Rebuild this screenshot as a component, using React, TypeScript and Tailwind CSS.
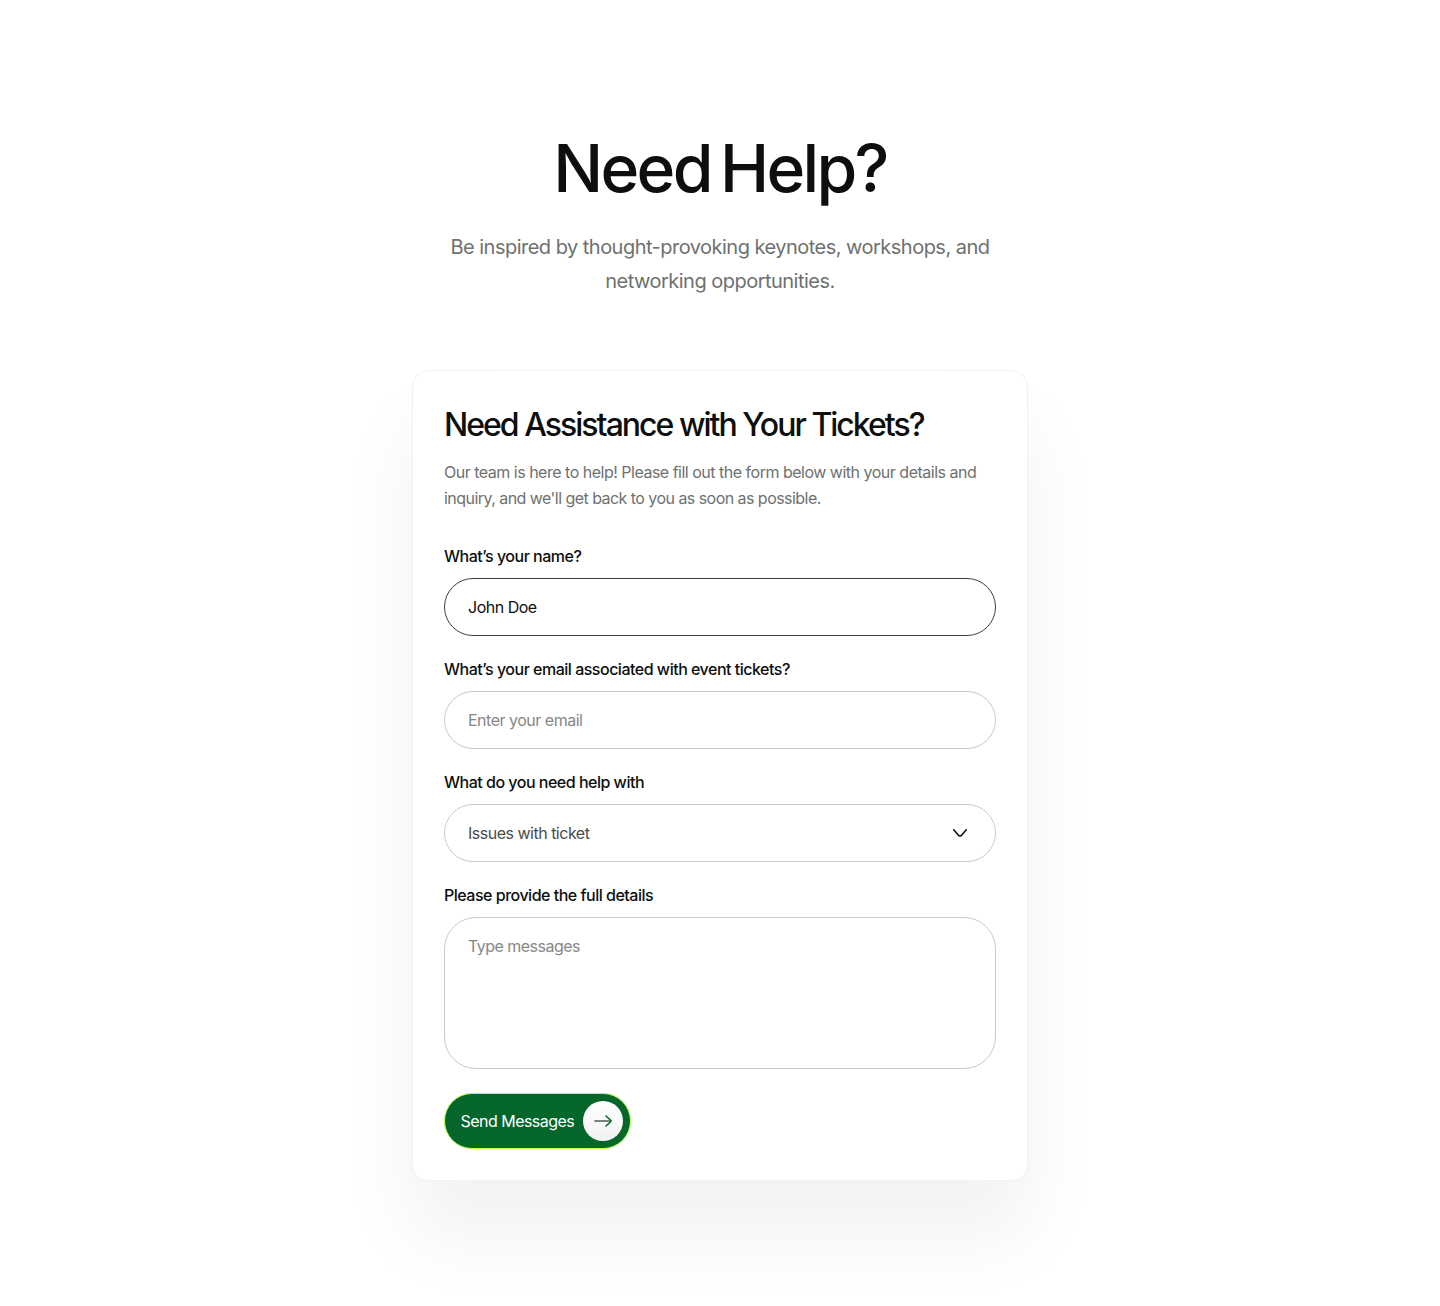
import React from "react";

const inputStyle = "block w-full h-[58px] rounded-full border bg-white px-[23px] text-base tracking-[-0.031em] outline-none";

const Field: React.FC<{ label: string; children: React.ReactNode }> = ({ label, children }) => {
  return (
    <label className="block">
      <span className="block mb-[9px] text-base leading-[26px] font-medium tracking-[-0.031em] text-[#0d0f0e]">{label}</span>
      {children}
    </label>
  );
};

export default function App() {
  return (
    <main className="min-h-[1306px] bg-white pt-[122px] font-['Inter',sans-serif] overflow-hidden">
      <header className="text-center">
        <h1 className="text-[66px] leading-[92px] font-[540] tracking-[-0.041em] [word-spacing:-0.085em] text-[#0d0f0e]">Need Help?</h1>
        <p className="mt-4 mx-auto w-[616px] text-xl leading-[34px] tracking-[-0.026em] text-[#6e716f]">
          Be inspired by thought-provoking keynotes, workshops, and
          <br />
          networking opportunities.
        </p>
      </header>
      <section className="mt-[72px] mx-auto w-[616px] rounded-2xl border border-[#f2f2f2] bg-white px-[31px] pt-[31px] pb-[31px] shadow-[0_56px_80px_rgba(0,0,0,0.055)]">
        <h2 className="text-[32px] leading-[45px] font-medium tracking-[-0.062em] whitespace-nowrap text-[#0d0f0e]">Need Assistance with Your Tickets?</h2>
        <p className="mt-3 text-base leading-[26px] tracking-[-0.031em] text-[#6e716f]">
          Our team is here to help! Please fill out the form below with your details and
          <br />
          <span className="tracking-[-0.034em]">inquiry, and we'll get back to you as soon as possible.</span>
        </p>
        <form className="mt-8">
          <div className="flex flex-col gap-5">
            <Field label="What’s your name?">
              <input className={`${inputStyle} border-[#3d3f3e] text-[#0d0f0e]`} defaultValue="John Doe" />
            </Field>
            <Field label="What’s your email associated with event tickets?">
              <input className={`${inputStyle} border-[#cacaca] placeholder:text-[#868887]`} placeholder="Enter your email" />
            </Field>
            <Field label="What do you need help with">
              <div className={`${inputStyle} !flex items-center justify-between border-[#cacaca] text-[#4a4c4b]`}>
                Issues with ticket
                <svg className="mr-1" width="16" height="16" viewBox="0 0 16 16" fill="none" stroke="#0d0f0e" strokeWidth="1.6" strokeLinecap="round" strokeLinejoin="round">
                  <path d="M1.7 4.8 5.8 9.5Q8 12.6 10.2 9.5L14.3 4.8" />
                </svg>
              </div>
            </Field>
            <Field label="Please provide the full details">
              <textarea
                className="block w-full h-[152px] resize-none rounded-[32px] border border-[#cacaca] bg-white px-[23px] py-[15px] text-base leading-[26px] tracking-[-0.033em] outline-none placeholder:text-[#868887]"
                placeholder="Type messages"
              />
            </Field>
          </div>
          <button type="button" className="mt-6 flex h-14 w-[187px] items-center justify-between rounded-full border border-[#b9ff46] bg-[#05662c] pl-[15.5px] pr-[7px] text-base tracking-[-0.033em] whitespace-nowrap text-white">
            Send Messages
            <span className="flex size-10 items-center justify-center rounded-full bg-gradient-to-b from-white to-[#f2f2f2]">
              <svg width="20" height="20" viewBox="0 0 20 20" fill="none" strokeWidth="1.6" strokeLinecap="round" strokeLinejoin="round">
                <path d="M2 10H18" stroke="#4b5c52" />
                <path d="M13 5 17.4 9Q18.4 10 17.4 11L13 15" stroke="#05662c" />
              </svg>
            </span>
          </button>
        </form>
      </section>
    </main>
  );
}
